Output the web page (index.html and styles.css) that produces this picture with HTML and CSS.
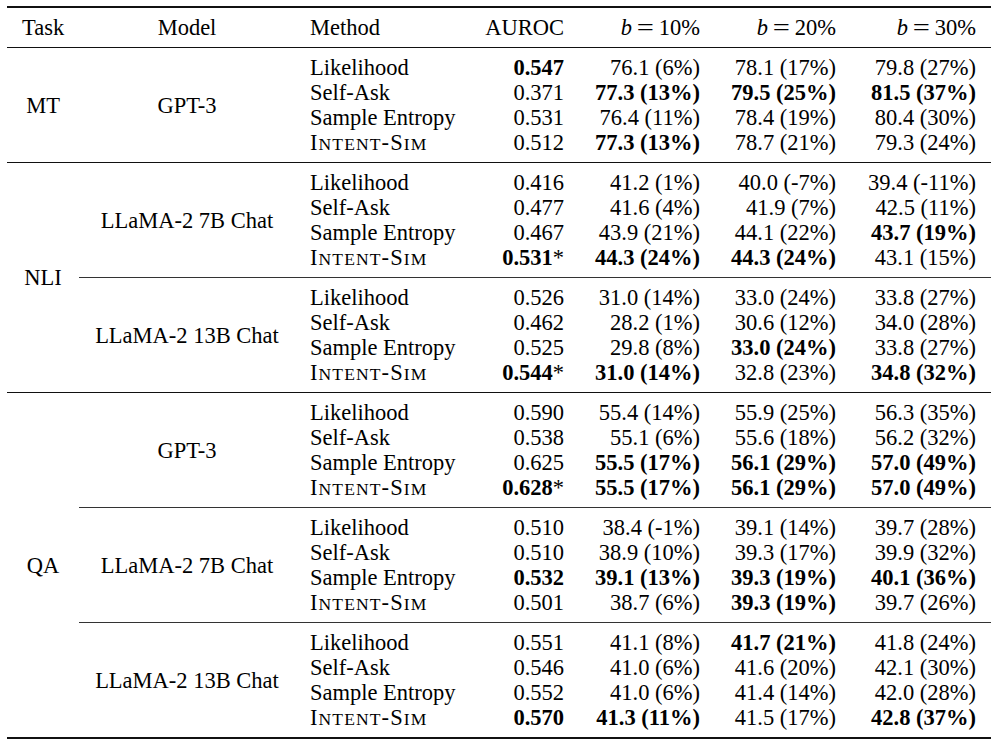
FILE: index.html
```html
<!DOCTYPE html>
<html>
<head>
<meta charset="utf-8">
<link rel="stylesheet" href="styles.css">
</head>
<body>
<table class="tbl">
  <colgroup>
    <col class="c-task"><col class="c-model"><col class="c-method"><col class="c-auroc"><col class="c-b"><col class="c-b"><col class="c-last">
  </colgroup>
  <thead>
    <tr>
      <th class="ctr">Task</th>
      <th class="ctr">Model</th>
      <th class="lft">Method</th>
      <th class="rgt">AUROC</th>
      <th class="rgt"><i>b</i><span class="eq">=</span>10%</th>
      <th class="rgt"><i>b</i><span class="eq">=</span>20%</th>
      <th class="rgt"><i>b</i><span class="eq">=</span>30%</th>
    </tr>
  </thead>
  <tbody>
    <!-- MT / GPT-3 -->
    <tr class="first">
      <td class="task" rowspan="4">MT</td>
      <td class="model" rowspan="4">GPT-3</td>
      <td class="method">Likelihood</td>
      <td class="num"><b>0.547</b></td>
      <td class="num">76.1 (6%)</td>
      <td class="num">78.1 (17%)</td>
      <td class="num">79.8 (27%)</td>
    </tr>
    <tr>
      <td class="method">Self-Ask</td>
      <td class="num">0.371</td>
      <td class="num"><b>77.3 (13%)</b></td>
      <td class="num"><b>79.5 (25%)</b></td>
      <td class="num"><b>81.5 (37%)</b></td>
    </tr>
    <tr>
      <td class="method">Sample Entropy</td>
      <td class="num">0.531</td>
      <td class="num">76.4 (11%)</td>
      <td class="num">78.4 (19%)</td>
      <td class="num">80.4 (30%)</td>
    </tr>
    <tr class="last">
      <td class="method"><span class="sc">I<span class="sm">NTENT</span>-S<span class="sm">IM</span></span></td>
      <td class="num">0.512</td>
      <td class="num"><b>77.3 (13%)</b></td>
      <td class="num">78.7 (21%)</td>
      <td class="num">79.3 (24%)</td>
    </tr>

    <!-- NLI / LLaMA-2 7B -->
    <tr class="first grp">
      <td class="task" rowspan="8">NLI</td>
      <td class="model" rowspan="4">LLaMA-2 7B Chat</td>
      <td class="method">Likelihood</td>
      <td class="num">0.416</td>
      <td class="num">41.2 (1%)</td>
      <td class="num">40.0 (-7%)</td>
      <td class="num">39.4 (-11%)</td>
    </tr>
    <tr>
      <td class="method">Self-Ask</td>
      <td class="num">0.477</td>
      <td class="num">41.6 (4%)</td>
      <td class="num">41.9 (7%)</td>
      <td class="num">42.5 (11%)</td>
    </tr>
    <tr>
      <td class="method">Sample Entropy</td>
      <td class="num">0.467</td>
      <td class="num">43.9 (21%)</td>
      <td class="num">44.1 (22%)</td>
      <td class="num"><b>43.7 (19%)</b></td>
    </tr>
    <tr class="last">
      <td class="method"><span class="sc">I<span class="sm">NTENT</span>-S<span class="sm">IM</span></span></td>
      <td class="num"><b>0.531</b>*</td>
      <td class="num"><b>44.3 (24%)</b></td>
      <td class="num"><b>44.3 (24%)</b></td>
      <td class="num">43.1 (15%)</td>
    </tr>

    <!-- NLI / LLaMA-2 13B -->
    <tr class="first sub">
      <td class="model" rowspan="4">LLaMA-2 13B Chat</td>
      <td class="method">Likelihood</td>
      <td class="num">0.526</td>
      <td class="num">31.0 (14%)</td>
      <td class="num">33.0 (24%)</td>
      <td class="num">33.8 (27%)</td>
    </tr>
    <tr>
      <td class="method">Self-Ask</td>
      <td class="num">0.462</td>
      <td class="num">28.2 (1%)</td>
      <td class="num">30.6 (12%)</td>
      <td class="num">34.0 (28%)</td>
    </tr>
    <tr>
      <td class="method">Sample Entropy</td>
      <td class="num">0.525</td>
      <td class="num">29.8 (8%)</td>
      <td class="num"><b>33.0 (24%)</b></td>
      <td class="num">33.8 (27%)</td>
    </tr>
    <tr class="last">
      <td class="method"><span class="sc">I<span class="sm">NTENT</span>-S<span class="sm">IM</span></span></td>
      <td class="num"><b>0.544</b>*</td>
      <td class="num"><b>31.0 (14%)</b></td>
      <td class="num">32.8 (23%)</td>
      <td class="num"><b>34.8 (32%)</b></td>
    </tr>

    <!-- QA / GPT-3 -->
    <tr class="first grp">
      <td class="task" rowspan="12">QA</td>
      <td class="model" rowspan="4">GPT-3</td>
      <td class="method">Likelihood</td>
      <td class="num">0.590</td>
      <td class="num">55.4 (14%)</td>
      <td class="num">55.9 (25%)</td>
      <td class="num">56.3 (35%)</td>
    </tr>
    <tr>
      <td class="method">Self-Ask</td>
      <td class="num">0.538</td>
      <td class="num">55.1 (6%)</td>
      <td class="num">55.6 (18%)</td>
      <td class="num">56.2 (32%)</td>
    </tr>
    <tr>
      <td class="method">Sample Entropy</td>
      <td class="num">0.625</td>
      <td class="num"><b>55.5 (17%)</b></td>
      <td class="num"><b>56.1 (29%)</b></td>
      <td class="num"><b>57.0 (49%)</b></td>
    </tr>
    <tr class="last">
      <td class="method"><span class="sc">I<span class="sm">NTENT</span>-S<span class="sm">IM</span></span></td>
      <td class="num"><b>0.628</b>*</td>
      <td class="num"><b>55.5 (17%)</b></td>
      <td class="num"><b>56.1 (29%)</b></td>
      <td class="num"><b>57.0 (49%)</b></td>
    </tr>

    <!-- QA / LLaMA-2 7B -->
    <tr class="first sub">
      <td class="model" rowspan="4">LLaMA-2 7B Chat</td>
      <td class="method">Likelihood</td>
      <td class="num">0.510</td>
      <td class="num">38.4 (-1%)</td>
      <td class="num">39.1 (14%)</td>
      <td class="num">39.7 (28%)</td>
    </tr>
    <tr>
      <td class="method">Self-Ask</td>
      <td class="num">0.510</td>
      <td class="num">38.9 (10%)</td>
      <td class="num">39.3 (17%)</td>
      <td class="num">39.9 (32%)</td>
    </tr>
    <tr>
      <td class="method">Sample Entropy</td>
      <td class="num"><b>0.532</b></td>
      <td class="num"><b>39.1 (13%)</b></td>
      <td class="num"><b>39.3 (19%)</b></td>
      <td class="num"><b>40.1 (36%)</b></td>
    </tr>
    <tr class="last">
      <td class="method"><span class="sc">I<span class="sm">NTENT</span>-S<span class="sm">IM</span></span></td>
      <td class="num">0.501</td>
      <td class="num">38.7 (6%)</td>
      <td class="num"><b>39.3 (19%)</b></td>
      <td class="num">39.7 (26%)</td>
    </tr>

    <!-- QA / LLaMA-2 13B -->
    <tr class="first sub">
      <td class="model" rowspan="4">LLaMA-2 13B Chat</td>
      <td class="method">Likelihood</td>
      <td class="num">0.551</td>
      <td class="num">41.1 (8%)</td>
      <td class="num"><b>41.7 (21%)</b></td>
      <td class="num">41.8 (24%)</td>
    </tr>
    <tr>
      <td class="method">Self-Ask</td>
      <td class="num">0.546</td>
      <td class="num">41.0 (6%)</td>
      <td class="num">41.6 (20%)</td>
      <td class="num">42.1 (30%)</td>
    </tr>
    <tr>
      <td class="method">Sample Entropy</td>
      <td class="num">0.552</td>
      <td class="num">41.0 (6%)</td>
      <td class="num">41.4 (14%)</td>
      <td class="num">42.0 (28%)</td>
    </tr>
    <tr class="last">
      <td class="method"><span class="sc">I<span class="sm">NTENT</span>-S<span class="sm">IM</span></span></td>
      <td class="num"><b>0.570</b></td>
      <td class="num"><b>41.3 (11%)</b></td>
      <td class="num">41.5 (17%)</td>
      <td class="num"><b>42.8 (37%)</b></td>
    </tr>
  </tbody>
</table>
</body>
</html>
```

FILE: styles.css
```css
html, body {
  margin: 0;
  padding: 0;
  background: #fff;
}

body {
  font-family: "Liberation Serif", "Times New Roman", serif;
  font-size: 22.5px;
  line-height: 25px;
  color: #000;
}

.tbl {
  margin: 6px 0 0 7px;
  width: 984px;
  table-layout: fixed;
  border-collapse: separate;
  border-spacing: 0;
  border-top: 2px solid #111;
  border-bottom: 2px solid #111;
}

.c-task { width: 72px; }
.c-model { width: 216px; }
.c-method { width: 175px; }
.c-auroc { width: 109px; }
.c-b { width: 136px; }
.c-last { width: 140px; }

.tbl th,
.tbl td {
  padding: 0 15px;
  white-space: nowrap;
  vertical-align: middle;
}

.tbl th {
  font-weight: normal;
  padding-top: 7px;
  padding-bottom: 7px;
  border-bottom: 1px solid #111;
}

.ctr { text-align: center; }
.lft { text-align: left; }
.rgt { text-align: right; }

.tbl tr.first td { padding-top: 7px; }
.tbl tr.last td { padding-bottom: 7px; }

.tbl tr.grp td { border-top: 1px solid #111; }
.tbl tr.sub td { border-top: 1px solid #333; }

.tbl tr.first td.task,
.tbl tr.first td.model {
  padding-top: 0;
  padding-bottom: 0;
  text-align: center;
}

.tbl td.method { text-align: left; }
.tbl td.num { text-align: right; }

b {
  font-weight: bold;
}

.eq {
  display: inline-block;
  line-height: 1;
  margin: 0 7px;
  transform: scaleX(1.35);
}

.sc {
  letter-spacing: 1.1px;
}

.sm {
  font-size: 0.78em;
  line-height: 1;
}
```
